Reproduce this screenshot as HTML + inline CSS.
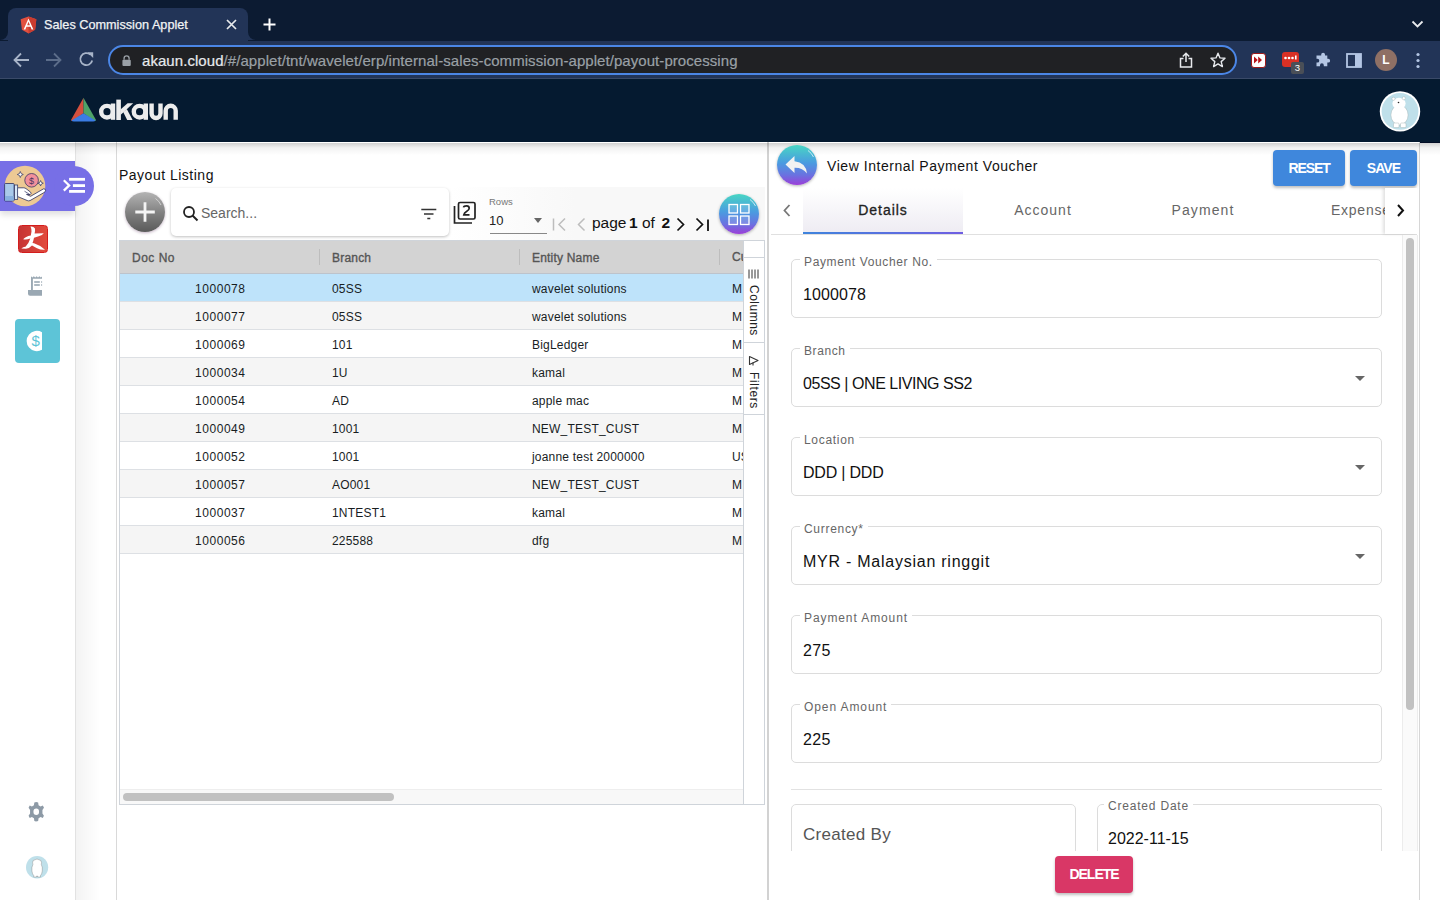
<!DOCTYPE html>
<html><head><meta charset="utf-8">
<style>
*{box-sizing:border-box;margin:0;padding:0}
html,body{width:1440px;height:900px;overflow:hidden;background:#fff;font-family:"Liberation Sans",sans-serif;position:relative}
.a{position:absolute}
/* chrome */
#topbar{left:0;top:0;width:1440px;height:41px;background:#0c1b32}
#tab{left:8px;top:8px;width:240px;height:33px;background:#223457;border-radius:8px 8px 0 0}
#toolbar{left:0;top:41px;width:1440px;height:38px;background:#223457;border-bottom:1px solid #3a4a68}
#omni{left:108px;top:45px;width:1129px;height:30px;background:#202124;border:2px solid #4b86e6;border-radius:15px}
.ctext{color:#e8eaed;font-size:14px}
/* app header */
#apphdr{left:0;top:79px;width:1440px;height:64px;background:#051a30;border-bottom:1px solid #020d25}
/* content */
#sidebar{left:0;top:142px;width:76px;height:758px;background:#fff;border-right:1px solid #e2e2e2}
#strip{left:76px;top:142px;width:41px;height:758px;background:linear-gradient(90deg,#f3f3f3,#fff 60%);border-right:1px solid #d9d9d9}
#hdrshadow{left:0;top:143px;width:1440px;height:12px;background:linear-gradient(180deg,rgba(0,0,0,.18),rgba(0,0,0,.05) 40%,rgba(0,0,0,0))}
#lpanel{left:117px;top:142px;width:652px;height:758px;background:#fff;border-right:2px solid #d2d2d2}
#rpanel{left:769px;top:142px;width:651px;height:758px;background:#fff;border-right:1px solid #d6d6d6}
.poppins{font-family:"Liberation Sans",sans-serif}
/* grid */
.row{position:absolute;left:120px;width:623px;height:28px;border-bottom:1px solid #dde0e4;font-size:12px;color:#181d1f}
.row span{position:absolute;top:8px;white-space:nowrap}
.fld{position:absolute;left:791px;width:591px;height:59px;border:1px solid #dcdcdc;border-radius:5px}
.flbl{position:absolute;background:#fff;padding:0 4px;font-size:12px;color:#666;top:-5px;left:8px;white-space:nowrap;letter-spacing:.3px}
.fval{position:absolute;left:11px;top:26px;font-size:16px;color:#111;white-space:nowrap;letter-spacing:.4px}
.arrow{position:absolute;right:16px;top:27px;width:0;height:0;border-left:5px solid transparent;border-right:5px solid transparent;border-top:5px solid #666}
</style></head><body>

<!-- Browser chrome -->
<div class="a" id="topbar"></div>
<div class="a" id="tab"></div>
<div class="a" id="toolbar"></div>
<div class="a" id="omni"></div>

<!-- tab contents -->
<div class="a" style="left:0;top:32px;width:8px;height:8px;background:#223457"></div>
<div class="a" style="left:0;top:24px;width:8px;height:16px;background:#0c1b32;border-bottom-right-radius:8px"></div>
<div class="a" style="left:248px;top:32px;width:8px;height:8px;background:#223457"></div>
<div class="a" style="left:248px;top:24px;width:8px;height:16px;background:#0c1b32;border-bottom-left-radius:8px"></div>
<svg class="a" style="left:19.5px;top:16px" width="17" height="18" viewBox="0 0 18 19" preserveAspectRatio="none">
  <path d="M9 0.5 L17.3 3.5 L16 14.5 L9 18.5 L2 14.5 L0.7 3.5 Z" fill="#e2503f"/>
  <path d="M9 0.5 L17.3 3.5 L16 14.5 L9 18.5 Z" fill="#c93c30"/>
  <path d="M9 2.6 L3.8 14.2 H5.7 L6.8 11.4 H11.2 L12.3 14.2 H14.2 Z M7.5 9.8 L9 6.2 L10.5 9.8 Z" fill="#fff"/>
</svg>
<div class="a ctext" style="left:44px;top:18px;font-size:12.7px;color:#f1f3f4;white-space:nowrap;-webkit-text-stroke:0.25px #f1f3f4">Sales Commission Applet</div>
<svg class="a" style="left:226px;top:19px" width="11" height="11" viewBox="0 0 11 11"><path d="M1 1L10 10M10 1L1 10" stroke="#e8eaed" stroke-width="1.7"/></svg>
<svg class="a" style="left:263px;top:18px" width="13" height="13" viewBox="0 0 13 13"><path d="M6.5 0.5V12.5M0.5 6.5H12.5" stroke="#fff" stroke-width="2"/></svg>
<svg class="a" style="left:1411px;top:20px" width="13" height="9" viewBox="0 0 13 9"><path d="M1.5 1.5L6.5 6.5L11.5 1.5" stroke="#e8eaed" stroke-width="1.8" fill="none"/></svg>
<!-- nav -->
<svg class="a" style="left:13px;top:52px" width="17" height="16" viewBox="0 0 17 16"><path d="M16 8H2M8 1.5L1.5 8L8 14.5" stroke="#a8b4c8" stroke-width="1.8" fill="none"/></svg>
<svg class="a" style="left:45px;top:52px" width="17" height="16" viewBox="0 0 17 16"><path d="M1 8H15M9 1.5L15.5 8L9 14.5" stroke="#5c6d8a" stroke-width="1.8" fill="none"/></svg>
<svg class="a" style="left:78px;top:51px" width="17" height="17" viewBox="0 0 17 17"><path d="M14.2 9.5A6 6 0 1 1 12.3 3.6" stroke="#a8b4c8" stroke-width="1.8" fill="none"/><path d="M9.3 1.2H15.2V7.1Z" fill="#a8b4c8"/></svg>
<!-- omnibox contents -->
<svg class="a" style="left:121.5px;top:55px" width="9.2" height="11" viewBox="0 0 11 14" preserveAspectRatio="none"><path d="M2.5 6V4.2A3 3 0 0 1 8.5 4.2V6" stroke="#9aa0a6" stroke-width="1.6" fill="none"/><rect x="0.5" y="6" width="10" height="8" rx="1.2" fill="#9aa0a6"/></svg>
<div class="a" style="left:142px;top:52px;font-size:15px;color:#e8eaed;white-space:nowrap;letter-spacing:0.06px;-webkit-text-stroke:0.2px">akaun.cloud<span style="color:#9aa0a6">/#/applet/tnt/wavelet/erp/internal-sales-commission-applet/payout-processing</span></div>
<svg class="a" style="left:1179px;top:52px" width="14" height="16" viewBox="0 0 14 16"><path d="M4.5 6.5H1.5V15H12.5V6.5H9.5" stroke="#e8eaed" stroke-width="1.5" fill="none"/><path d="M7 10V1.5M3.8 4.5L7 1.3L10.2 4.5" stroke="#e8eaed" stroke-width="1.5" fill="none"/></svg>
<svg class="a" style="left:1210px;top:52px" width="16" height="16" viewBox="0 0 16 16"><path d="M8 1.2L10 5.9L15 6.3L11.2 9.6L12.4 14.6L8 11.9L3.6 14.6L4.8 9.6L1 6.3L6 5.9Z" stroke="#e8eaed" stroke-width="1.4" fill="none" stroke-linejoin="round"/></svg>
<!-- extensions -->
<div class="a" style="left:1251px;top:52.5px;width:15px;height:15px;background:#fff;border-radius:3px;border:1.6px solid #9e1a1a"></div>
<svg class="a" style="left:1252px;top:55px" width="12" height="10" viewBox="0 0 12 10"><path d="M2 1.5L5.8 5L2 8.5ZM6.2 1.5L10 5L6.2 8.5Z" fill="#b8141a"/></svg>
<div class="a" style="left:1282px;top:52px;width:17px;height:15px;background:#d93025;border-radius:3px"></div>
<svg class="a" style="left:1283px;top:55px" width="15" height="6" viewBox="0 0 15 6"><circle cx="2.5" cy="3" r="1.3" fill="#fff"/><circle cx="6" cy="3" r="1.3" fill="#fff"/><circle cx="9.5" cy="3" r="1.3" fill="#fff"/><rect x="12" y="0.5" width="1.6" height="4" fill="#fff"/></svg>
<div class="a" style="left:1291px;top:62px;width:13px;height:12px;background:#4a4f57;border-radius:2px;color:#fff;font-size:9.5px;line-height:12px;text-align:center">3</div>
<svg class="a" style="left:1314px;top:52px" width="17" height="17" viewBox="0 0 17 17"><path d="M5 3.5H7.2V2.6A1.9 1.9 0 0 1 11 2.6V3.5H13.3V6.8H14.2A1.9 1.9 0 0 1 14.2 10.6H13.3V14.2H9.8V13.2A1.9 1.9 0 0 0 6 13.2V14.2H2.5V10.6H3.4A1.9 1.9 0 0 0 3.4 6.8H2.5V3.5Z" fill="#b4c6e4"/></svg>
<svg class="a" style="left:1346px;top:53px" width="16" height="15" viewBox="0 0 16 15"><rect x="1" y="1" width="14" height="13" stroke="#b4c6e4" stroke-width="1.8" fill="none"/><rect x="9" y="1" width="6" height="13" fill="#b4c6e4"/></svg>
<div class="a" style="left:1375px;top:49px;width:22px;height:22px;border-radius:50%;background:#8f7065;color:#fff;font-weight:bold;font-size:12px;line-height:22px;text-align:center">L</div>
<svg class="a" style="left:1415px;top:52px" width="6" height="17" viewBox="0 0 6 17"><circle cx="3" cy="2.5" r="1.6" fill="#b4c6e4"/><circle cx="3" cy="8.5" r="1.6" fill="#b4c6e4"/><circle cx="3" cy="14.5" r="1.6" fill="#b4c6e4"/></svg>


<!-- App header -->
<div class="a" id="apphdr"></div>

<!-- logo -->
<svg class="a" style="left:60px;top:90px" width="130" height="40" viewBox="60 90 130 40">
  <path d="M83.5 97.8 L71 120 Q71 121 72.5 121 L83.5 113.3 Z" fill="#d4503e"/>
  <path d="M83.5 97.8 L96 120 Q96 121 94.5 121 L83.5 113.3 Z" fill="#4ea468"/>
  <path d="M83.5 113.3 L71.5 120.5 Q72 121.5 74 121.5 L93 121.5 Q95 121.5 95.5 120.5 Z" fill="#3b7ce3"/>
  <g fill="none" stroke="#ececec" stroke-width="4.4" transform="translate(0,0.3)">
    <circle cx="107" cy="111.4" r="5.8"/>
    <path d="M113 103.2V119.5"/>
    
    <circle cx="139.6" cy="111.4" r="5.8"/>
    <path d="M145.8 103.2V119.5"/>
    <path d="M151.6 103.2V113.2A4.45 4.45 0 0 0 160.5 113.2V103.2"/>
    <path d="M165.7 119.5V110.5A5 5 0 0 1 175.7 110.5V119.5"/>
  </g>
  <g fill="#ececec" transform="translate(0,0.3)"><rect x="116.3" y="99.3" width="4.6" height="20.4"/><path d="M120.5 109.2 L127.6 103 H133.2 L120.5 114.6 Z"/><path d="M123.2 111.8 L126.8 108.6 L132.6 119.7 H127.2 Z"/></g>
</svg>
<!-- header avatar -->
<svg class="a" style="left:1378px;top:89px" width="45" height="45" viewBox="1378 89 45 45">
  <circle cx="1400" cy="111.4" r="20.2" fill="#fff"/>
  <circle cx="1400" cy="111.4" r="18.4" fill="#bfe0ea"/>
  <ellipse cx="1399.5" cy="115" rx="8.6" ry="10" fill="#fff" stroke="#9aa" stroke-width="0.4"/>
  <ellipse cx="1399" cy="103.5" rx="6.6" ry="5.8" fill="#fff"/>
  <circle cx="1393.5" cy="98.8" r="1.6" fill="#fff" stroke="#9aa" stroke-width="0.4"/>
  <circle cx="1403.8" cy="98.2" r="1.6" fill="#fff" stroke="#9aa" stroke-width="0.4"/>
  <circle cx="1398.5" cy="102.5" r="0.8" fill="#222"/>
  <rect x="1393.5" y="123" width="5.5" height="4.6" rx="1" fill="#fff" stroke="#9aa" stroke-width="0.4"/>
  <rect x="1400.5" y="123" width="5.5" height="4.6" rx="1" fill="#fff" stroke="#9aa" stroke-width="0.4"/>
</svg>


<!-- Content -->
<div class="a" id="sidebar"></div>
<div class="a" id="strip"></div>
<div class="a" id="lpanel"></div>
<div class="a" id="rpanel"></div>
<div class="a" id="hdrshadow"></div>


<!-- LEFT PANEL -->
<div class="a" style="left:119px;top:167px;font-size:14px;color:#111;letter-spacing:0.5px;white-space:nowrap">Payout Listing</div>
<div class="a" style="left:449px;top:187px;width:316px;height:54px;background:linear-gradient(90deg,rgba(249,249,249,0),#f8f8f8 40%)"></div>
<!-- add btn -->
<div class="a" style="left:125px;top:192px;width:40px;height:40px;border-radius:50%;background:linear-gradient(180deg,#b4b4b4 0%,#7e7e7e 55%,#5a5a5a 100%);box-shadow:0 1px 3px rgba(60,0,60,.3)"></div>
<svg class="a" style="left:125px;top:192px" width="40" height="40" viewBox="0 0 40 40"><path d="M20 10.3V29.8M10.3 20H29.8" stroke="#f4f4f4" stroke-width="2.8"/><path d="M30.5 6.5A16 16 0 0 1 36 13" stroke="#ddd" stroke-width="0.8" fill="none"/></svg>
<!-- search -->
<div class="a" style="left:171px;top:188px;width:278px;height:48px;background:#fff;border-radius:5px;box-shadow:0 1px 3px rgba(0,0,0,.25)"></div>
<svg class="a" style="left:182px;top:205px" width="17" height="17" viewBox="0 0 17 17"><circle cx="7" cy="7" r="5" stroke="#222" stroke-width="1.8" fill="none"/><path d="M10.5 10.5L15.5 15.5" stroke="#222" stroke-width="2"/></svg>
<div class="a" style="left:201px;top:205px;font-size:14px;color:#666;white-space:nowrap">Search...</div>
<svg class="a" style="left:420px;top:207px" width="18" height="14" viewBox="0 0 18 14"><path d="M1.3 2.5H16.3M4 7H13.5M7.3 11.5H10.3" stroke="#333" stroke-width="1.6"/></svg>
<!-- library icon -->
<svg class="a" style="left:453px;top:201px" width="24" height="24" viewBox="0 0 24 24">
  <path d="M1.5 5V22H19" stroke="#222" stroke-width="1.7" fill="none"/>
  <rect x="5.5" y="1.5" width="16.5" height="16.5" rx="1.5" stroke="#222" stroke-width="1.7" fill="none"/>
  <path d="M10.5 6.3Q10.8 4.8 13.6 4.8Q16.2 4.8 16.2 7.2Q16.2 9 13.5 10.5Q11.2 11.8 10.8 13.8H16.5" stroke="#222" stroke-width="1.7" fill="none"/>
</svg>
<!-- rows select -->
<div class="a" style="left:489px;top:196px;font-size:9.5px;color:#777;white-space:nowrap">Rows</div>
<div class="a" style="left:489px;top:213px;font-size:13px;color:#222;white-space:nowrap">10</div>
<div class="a" style="left:534px;top:218px;width:0;height:0;border-left:4.5px solid transparent;border-right:4.5px solid transparent;border-top:5px solid #666"></div>
<div class="a" style="left:490px;top:233px;width:57px;height:1px;background:#888"></div>
<!-- pager -->
<svg class="a" style="left:552px;top:217px" width="16" height="15" viewBox="0 0 16 15"><path d="M1.5 1.5V13.5" stroke="#bdbdbd" stroke-width="1.5"/><path d="M13 1.5L7 7.5L13 13.5" stroke="#bdbdbd" stroke-width="1.5" fill="none"/></svg>
<svg class="a" style="left:576px;top:217px" width="10" height="15" viewBox="0 0 10 15"><path d="M8.5 1.5L2.5 7.5L8.5 13.5" stroke="#bdbdbd" stroke-width="1.5" fill="none"/></svg>
<div class="a" style="left:592px;top:214px;font-size:15.5px;color:#111;white-space:nowrap">page</div>
<div class="a" style="left:629px;top:214px;font-size:15.5px;color:#111;font-weight:bold;white-space:nowrap">1</div>
<div class="a" style="left:642px;top:214px;font-size:15.5px;color:#111;white-space:nowrap">of</div>
<div class="a" style="left:661.5px;top:214px;font-size:15.5px;color:#111;font-weight:bold;white-space:nowrap">2</div>
<svg class="a" style="left:676px;top:217px" width="10" height="15" viewBox="0 0 10 15"><path d="M1.5 1.5L7.5 7.5L1.5 13.5" stroke="#111" stroke-width="1.7" fill="none"/></svg>
<svg class="a" style="left:695px;top:217px" width="16" height="15" viewBox="0 0 16 15"><path d="M1.5 1.5L7.5 7.5L1.5 13.5" stroke="#111" stroke-width="1.7" fill="none"/><path d="M13 2.5V14" stroke="#111" stroke-width="1.8"/></svg>
<!-- grid view button -->
<div class="a" style="left:719px;top:194px;width:40px;height:40px;border-radius:50%;background:linear-gradient(180deg,#48d6c4 0%,#4a9be0 45%,#6a72e0 75%,#9b3fd8 100%);box-shadow:0 1px 3px rgba(0,0,0,.3)"></div>
<svg class="a" style="left:719px;top:194px" width="40" height="40" viewBox="0 0 40 40">
  <rect x="10" y="10.5" width="8.5" height="8.5" stroke="#fff" stroke-width="1.3" fill="rgba(255,255,255,.15)"/>
  <rect x="21.5" y="10.5" width="8.5" height="8.5" stroke="#fff" stroke-width="1.3" fill="rgba(255,255,255,.15)"/>
  <rect x="10" y="22" width="8.5" height="8.5" stroke="#fff" stroke-width="1.3" fill="rgba(255,255,255,.15)"/>
  <rect x="21.5" y="22" width="8.5" height="8.5" stroke="#fff" stroke-width="1.3" fill="rgba(255,255,255,.15)"/>
  <path d="M31 5.5A17 17 0 0 1 36.5 12" stroke="#e8f4ff" stroke-width="0.8" fill="none"/>
</svg>

<!-- GRID -->
<div class="a" style="left:119px;top:240px;width:646px;height:565px;border:1px solid #cfd4da;background:#fff"></div>
<div class="a" style="left:120px;top:241px;width:623px;height:33px;background:#d3d3d3;border-bottom:1px solid #bdc3cb"></div>
<div class="a" style="left:319px;top:249px;width:1px;height:16px;background:#bdbdbd"></div>
<div class="a" style="left:519px;top:249px;width:1px;height:16px;background:#bdbdbd"></div>
<div class="a" style="left:719px;top:249px;width:1px;height:16px;background:#bdbdbd"></div>
<div class="a" style="left:132px;top:251px;font-size:12px;color:#555;-webkit-text-stroke:0.35px #555;white-space:nowrap;letter-spacing:.5px">Doc No</div>
<div class="a" style="left:332px;top:251px;font-size:12px;color:#555;-webkit-text-stroke:0.35px #555;white-space:nowrap;letter-spacing:.2px">Branch</div>
<div class="a" style="left:532px;top:251px;font-size:12px;color:#555;-webkit-text-stroke:0.35px #555;white-space:nowrap;letter-spacing:.2px">Entity Name</div>
<div class="a" style="left:732px;top:250px;width:11px;overflow:hidden;font-size:12px;color:#555;-webkit-text-stroke:0.35px #555;white-space:nowrap">Cu</div>
<div class="row" style="top:274px;background:#bee3fa"><span style="left:75px;letter-spacing:.55px">1000078</span><span style="left:212px;letter-spacing:.2px">05SS</span><span style="left:412px;letter-spacing:.2px">wavelet solutions</span><span style="left:612px;width:11px;overflow:hidden">M</span></div>
<div class="row" style="top:302px;background:#f5f5f5"><span style="left:75px;letter-spacing:.55px">1000077</span><span style="left:212px;letter-spacing:.2px">05SS</span><span style="left:412px;letter-spacing:.2px">wavelet solutions</span><span style="left:612px;width:11px;overflow:hidden">M</span></div>
<div class="row" style="top:330px;background:#fff"><span style="left:75px;letter-spacing:.55px">1000069</span><span style="left:212px;letter-spacing:.2px">101</span><span style="left:412px;letter-spacing:.2px">BigLedger</span><span style="left:612px;width:11px;overflow:hidden">M</span></div>
<div class="row" style="top:358px;background:#f5f5f5"><span style="left:75px;letter-spacing:.55px">1000034</span><span style="left:212px;letter-spacing:.2px">1U</span><span style="left:412px;letter-spacing:.2px">kamal</span><span style="left:612px;width:11px;overflow:hidden">M</span></div>
<div class="row" style="top:386px;background:#fff"><span style="left:75px;letter-spacing:.55px">1000054</span><span style="left:212px;letter-spacing:.2px">AD</span><span style="left:412px;letter-spacing:.2px">apple mac</span><span style="left:612px;width:11px;overflow:hidden">M</span></div>
<div class="row" style="top:414px;background:#f5f5f5"><span style="left:75px;letter-spacing:.55px">1000049</span><span style="left:212px;letter-spacing:.2px">1001</span><span style="left:412px;letter-spacing:.2px">NEW_TEST_CUST</span><span style="left:612px;width:11px;overflow:hidden">M</span></div>
<div class="row" style="top:442px;background:#fff"><span style="left:75px;letter-spacing:.55px">1000052</span><span style="left:212px;letter-spacing:.2px">1001</span><span style="left:412px;letter-spacing:.2px">joanne test 2000000</span><span style="left:612px;width:11px;overflow:hidden">US</span></div>
<div class="row" style="top:470px;background:#f5f5f5"><span style="left:75px;letter-spacing:.55px">1000057</span><span style="left:212px;letter-spacing:.2px">AO001</span><span style="left:412px;letter-spacing:.2px">NEW_TEST_CUST</span><span style="left:612px;width:11px;overflow:hidden">M</span></div>
<div class="row" style="top:498px;background:#fff"><span style="left:75px;letter-spacing:.55px">1000037</span><span style="left:212px;letter-spacing:.2px">1NTEST1</span><span style="left:412px;letter-spacing:.2px">kamal</span><span style="left:612px;width:11px;overflow:hidden">M</span></div>
<div class="row" style="top:526px;background:#f5f5f5"><span style="left:75px;letter-spacing:.55px">1000056</span><span style="left:212px;letter-spacing:.2px">225588</span><span style="left:412px;letter-spacing:.2px">dfg</span><span style="left:612px;width:11px;overflow:hidden">M</span></div>

<!-- side bar columns/filters -->
<div class="a" style="left:743px;top:241px;width:1px;height:563px;background:#cfd4da"></div>
<div class="a" style="left:744px;top:257px;width:20px;height:1px;background:#cfd4da"></div>
<div class="a" style="left:744px;top:342px;width:20px;height:1px;background:#cfd4da"></div>
<div class="a" style="left:744px;top:414px;width:20px;height:1px;background:#cfd4da"></div>
<svg class="a" style="left:748px;top:268px" width="12" height="12" viewBox="0 0 12 12"><path d="M1 1.5V10.5M4 1.5V10.5M7 1.5V10.5M10 1.5V10.5" stroke="#333" stroke-width="1"/></svg>
<div class="a" style="left:747px;top:285px;width:14px;height:56px"><div style="position:absolute;left:0;top:0;transform-origin:0 0;transform:translate(14px,0) rotate(90deg);font-size:12px;color:#222;white-space:nowrap;letter-spacing:0.5px">Columns</div></div>
<svg class="a" style="left:748px;top:355px" width="12" height="12" viewBox="0 0 12 12"><path d="M1.5 1.5L10 5.5L1.5 9.5Z" stroke="#333" stroke-width="1.1" fill="none" stroke-linejoin="round"/><path d="M5 7.5L5 10.5" stroke="#333" stroke-width="1.1"/></svg>
<div class="a" style="left:747px;top:372px;width:14px;height:40px"><div style="position:absolute;left:0;top:0;transform-origin:0 0;transform:translate(14px,0) rotate(90deg);font-size:12px;color:#222;white-space:nowrap;letter-spacing:0.6px">Filters</div></div>
<!-- horizontal scrollbar -->
<div class="a" style="left:120px;top:789px;width:623px;height:15px;background:#f8f8f8;border-top:1px solid #eee"></div>
<div class="a" style="left:123px;top:793px;width:271px;height:8px;border-radius:4px;background:#c1c1c1"></div>


<!-- RIGHT PANEL -->
<div class="a" style="left:777px;top:145px;width:40px;height:40px;border-radius:50%;background:linear-gradient(180deg,#48d6c4 0%,#4a9be0 45%,#6a72e0 75%,#9b3fd8 100%);box-shadow:0 1px 3px rgba(0,0,0,.3)"></div>
<svg class="a" style="left:777px;top:145px" width="40" height="40" viewBox="0 0 40 40">
  <path d="M17.5 11 L8.5 19.5 L17.5 28 V22.8 Q25.5 22.5 30 28.5 Q29 17.5 17.5 16.2 Z" fill="#f2f2f2"/>
  <path d="M31 5.5A17 17 0 0 1 36.5 12" stroke="#e8f4ff" stroke-width="0.8" fill="none"/>
</svg>
<div class="a" style="left:827px;top:157.5px;font-size:14px;color:#111;letter-spacing:0.55px;white-space:nowrap">View Internal Payment Voucher</div>
<div class="a" style="left:1273px;top:150px;width:72px;height:36px;border-radius:4px;background:#3f87dc;box-shadow:0 2px 3px rgba(0,0,0,.25)"></div>
<div class="a" style="left:1350px;top:150px;width:67px;height:36px;border-radius:4px;background:#3f87dc;box-shadow:0 2px 3px rgba(0,0,0,.25)"></div>
<div class="a" style="left:1273px;top:160px;width:72px;text-align:center;font-size:14px;font-weight:bold;color:#fff;letter-spacing:-1.1px">RESET</div>
<div class="a" style="left:1350px;top:160px;width:67px;text-align:center;font-size:14px;font-weight:bold;color:#fff;letter-spacing:-0.9px">SAVE</div>
<!-- tabs -->
<div class="a" style="left:771px;top:234px;width:646px;height:1px;background:#e0e0e0"></div>
<svg class="a" style="left:781px;top:203px" width="12" height="15" viewBox="0 0 12 15"><path d="M8.5 2L3.5 7.5L8.5 13" stroke="#777" stroke-width="1.8" fill="none"/></svg>
<div class="a" style="left:803px;top:188px;width:160px;height:44px;background:linear-gradient(180deg,#fff,#eeecf3)"></div>
<div class="a" style="left:803px;top:232px;width:160px;height:2px;background:linear-gradient(90deg,#3e84dc,#6f5ee2)"></div>
<div class="a" style="left:803px;top:202px;width:160px;text-align:center;font-size:14px;color:#222;letter-spacing:0.95px;-webkit-text-stroke:0.3px #222">Details</div>
<div class="a" style="left:963px;top:202px;width:160px;text-align:center;font-size:14px;color:#666;letter-spacing:1px">Account</div>
<div class="a" style="left:1123px;top:202px;width:160px;text-align:center;font-size:14px;color:#666;letter-spacing:1.1px">Payment</div>
<div class="a" style="left:1283px;top:188px;width:102px;height:46px;overflow:hidden"><div style="position:absolute;left:48px;top:14px;font-size:14px;color:#666;letter-spacing:0.75px;white-space:nowrap">Expense</div></div>
<div class="a" style="left:1385px;top:188px;width:32px;height:46px;background:#fff;box-shadow:-2px 0 3px rgba(0,0,0,.12)"></div>
<svg class="a" style="left:1395px;top:203px" width="12" height="15" viewBox="0 0 12 15"><path d="M3 2L8 7.5L3 13" stroke="#111" stroke-width="2" fill="none"/></svg>
<!-- form scroll -->
<div class="a" style="left:1402px;top:235px;width:16px;height:616px;background:#fafafa;border-left:1px solid #ececec;border-right:1px solid #ececec"></div>
<div class="a" style="left:1406px;top:238px;width:8px;height:472px;border-radius:4px;background:#c1c1c1"></div>
<div class="fld" style="top:259px"><div class="flbl" style="letter-spacing:0.63px">Payment Voucher No.</div><div class="fval" style="letter-spacing:0.1px">1000078</div></div>
<div class="fld" style="top:348px"><div class="flbl" style="letter-spacing:0.6px">Branch</div><div class="fval" style="letter-spacing:-0.45px">05SS | ONE LIVING SS2</div><div class="arrow"></div></div>
<div class="fld" style="top:437px"><div class="flbl" style="letter-spacing:0.7px">Location</div><div class="fval" style="letter-spacing:-0.2px">DDD | DDD</div><div class="arrow"></div></div>
<div class="fld" style="top:526px"><div class="flbl" style="letter-spacing:0.7px">Currency*</div><div class="fval" style="letter-spacing:0.75px">MYR - Malaysian ringgit</div><div class="arrow"></div></div>
<div class="fld" style="top:615px"><div class="flbl" style="letter-spacing:0.9px">Payment Amount</div><div class="fval" style="letter-spacing:0.3px">275</div></div>
<div class="fld" style="top:704px"><div class="flbl" style="letter-spacing:0.9px">Open Amount</div><div class="fval" style="letter-spacing:0.3px">225</div></div>

<div class="a" style="left:791px;top:789px;width:591px;height:1px;background:#e2e2e2"></div>
<div class="a" style="left:770px;top:804px;width:631px;height:47px;overflow:hidden">
  <div style="position:absolute;left:21px;top:0;width:285px;height:60px;border:1px solid #dcdcdc;border-radius:5px"></div>
  <div style="position:absolute;left:33px;top:21px;font-size:17px;color:#555;letter-spacing:0.3px;white-space:nowrap">Created By</div>
  <div style="position:absolute;left:327px;top:0;width:285px;height:60px;border:1px solid #dcdcdc;border-radius:5px"></div>
  
  <div style="position:absolute;left:338px;top:26px;font-size:16px;color:#111;white-space:nowrap">2022-11-15</div>
</div>
<div class="a" style="left:1104px;top:799px;background:#fff;padding:0 4px;font-size:12px;color:#666;letter-spacing:0.8px;white-space:nowrap">Created Date</div>
<!-- footer -->
<div class="a" style="left:769px;top:851px;width:650px;height:49px;background:#fff"></div>
<div class="a" style="left:1055px;top:856px;width:78px;height:37px;border-radius:4px;background:#d93766;box-shadow:0 2px 3px rgba(0,0,0,.25)"></div>
<div class="a" style="left:1055px;top:866px;width:78px;text-align:center;font-size:14px;font-weight:bold;color:#fff;letter-spacing:-1.0px">DELETE</div>

<!-- sidebar items -->
<div class="a" style="left:0;top:161px;width:75px;height:50px;background:#776fe6;box-shadow:0 4px 6px rgba(0,0,0,.12)"></div>
<div class="a" style="left:54px;top:166px;width:40px;height:40px;border-radius:20px;background:#776fe6"></div>
<svg class="a" style="left:0;top:160px" width="50" height="52" viewBox="0 160 50 52">
  <circle cx="25" cy="186" r="20.3" fill="#edc994"/>
  <path d="M20.3 171.5l0.9 2.1 2.1 0.9-2.1 0.9-0.9 2.1-0.9-2.1-2.1-0.9 2.1-0.9z" fill="#fff" stroke="#2b2f5e" stroke-width="0.7"/>
  <path d="M40.6 180.5l0.8 1.9 1.9 0.8-1.9 0.8-0.8 1.9-0.8-1.9-1.9-0.8 1.9-0.8z" fill="#fff" stroke="#2b2f5e" stroke-width="0.7"/>
  <circle cx="31.6" cy="180.3" r="6.8" fill="#f2909b" stroke="#3b3563" stroke-width="0.8"/>
  <text x="31.6" y="183.6" font-size="9" text-anchor="middle" fill="#4a3560" font-family="Liberation Sans">$</text>
  <path d="M17.5 187.8 L23.8 187.8 Q25 187.9 26 188.6 L30.6 192.2 Q31.8 193.6 30.2 194.6 L26.5 194.4 L30.6 196.3 L43.6 188.8 Q45.8 188.6 45.6 190.8 Q45.3 191.8 44 192.6 L30 200.6 Q28.6 201.2 27.2 200.5 L17.5 196.5 Z" fill="#fff" stroke="#2b2f5e" stroke-width="0.8" stroke-linejoin="round"/><path d="M24.5 191.2 L29.8 194.5" stroke="#2b2f5e" stroke-width="0.7"/>
  <rect x="14.5" y="185" width="3.2" height="14.5" fill="#d8e8f8" stroke="#2b2f5e" stroke-width="0.7"/>
  <rect x="4.6" y="183.5" width="9.5" height="17.5" rx="0.8" fill="#a9c9ea" stroke="#2b2f5e" stroke-width="0.8"/>
  <rect x="5" y="196" width="8.7" height="4.6" fill="#88b0e0"/>
</svg>
<svg class="a" style="left:62px;top:177px" width="24" height="17" viewBox="62 177 24 17">
  <path d="M63.8 180.2L69.2 185.4L63.8 190.6" stroke="#fff" stroke-width="2.2" fill="none"/>
  <rect x="69.1" y="177.9" width="15.9" height="2.8" fill="#fff"/>
  <rect x="72.9" y="184.2" width="12.1" height="2.8" fill="#fff"/>
  <rect x="69.1" y="190" width="15.9" height="2.8" fill="#fff"/>
</svg>
<!-- red icon -->
<div class="a" style="left:18px;top:224.5px;width:30px;height:28.5px;border-radius:3.5px;background:linear-gradient(90deg,#c63535,#e24a3c);border:1px solid #d41c1c"></div>
<svg class="a" style="left:14px;top:220px" width="38" height="36" viewBox="14 220 38 36">
  <path d="M30.5 226.5 Q33.5 226.2 35 228.5 Q35.3 231 34.6 233.5 L43.8 233.2 Q42 236 38 236.5 L34 237.8 Q33.4 241 32.5 243 L34 243.2 Q40 245 45 249.8 Q41 250.2 37 248.3 Q34 246.5 32 245.5 Q29.5 248.3 26 248.8 L21.3 248.5 Q23.5 246.5 25.5 246.7 Q29 243 30.3 238.5 Q26.5 239.8 23.2 239.2 Q25.5 236.5 30.8 235.5 L31.5 231.5 Q31.5 228.5 30.5 226.5 Z" fill="#fff"/>
</svg>
<!-- receipt icon -->
<svg class="a" style="left:22px;top:270px" width="26" height="30" viewBox="22 270 26 30">
  <path d="M31 276.3 L32.4 277.6 L33.8 276.3 L35.2 277.6 L36.6 276.3 L38 277.6 L39.4 276.3 L40.8 277.6 L42 276.6 V278.8 H32.9 V290 H31 Z" fill="#9aa8b3"/>
  <rect x="34.2" y="281.2" width="5.6" height="1.6" fill="#9aa8b3"/>
  <rect x="34.2" y="284.2" width="5.6" height="1.6" fill="#9aa8b3"/>
  <rect x="41.2" y="281.2" width="0.9" height="1.6" fill="#9aa8b3"/>
  <rect x="41.2" y="284.2" width="0.9" height="1.6" fill="#9aa8b3"/>
  <path d="M28 290 H42 V295.8 H30 Q28 295.8 28 293.8 Z" fill="#9aa8b3"/>
</svg>
<!-- teal dollar -->
<div class="a" style="left:15px;top:318.5px;width:45px;height:44.5px;border-radius:4px;background:#5dc4d7"></div>
<svg class="a" style="left:15px;top:318px" width="45" height="45" viewBox="15 318 45 45">
  <path d="M42 332.2 A10.2 10.2 0 1 0 42 349.8 Z" fill="#fff"/>
  <text x="35.6" y="346.2" font-size="15" text-anchor="middle" fill="#5dc4d7" font-family="Liberation Sans">$</text>
</svg>
<!-- gear -->
<svg class="a" style="left:28px;top:800.5px" width="16.5" height="21.5" viewBox="0 0 20 22" preserveAspectRatio="none">
  <path d="M10 1 L12.3 1.5 L12.8 4.3 L15.3 5.7 L17.9 4.7 L19.3 6.7 L19.3 7 L17.5 9.2 L17.5 12.8 L19.3 15 L17.9 17.3 L15.3 16.3 L12.8 17.7 L12.3 20.5 L9.7 21 L7.7 20.5 L7.2 17.7 L4.7 16.3 L2.1 17.3 L0.7 15 L2.5 12.8 L2.5 9.2 L0.7 7 L2.1 4.7 L4.7 5.7 L7.2 4.3 L7.7 1.5 Z M10 7.6 A3.4 3.4 0 1 0 10 14.4 A3.4 3.4 0 1 0 10 7.6Z" fill="#8d9aa6" fill-rule="evenodd"/>
</svg>
<!-- small bear -->
<svg class="a" style="left:25px;top:855px" width="25" height="25" viewBox="0 0 25 25">
  <ellipse cx="12.1" cy="12.2" rx="11.1" ry="11.3" fill="#bfe0ea"/>
  <path d="M8.2 5.5 Q12 2.5 15.8 5.5 Q17 7.5 16.3 9.5 Q17.8 12 17.3 16 Q16.8 19.5 15.5 20.5 L15.5 22 H12.6 V21 H11.6 V22 H8.7 V20.5 Q7.3 19.5 6.9 16 Q6.4 12 7.9 9.5 Q7.2 7.5 8.2 5.5 Z" fill="#fff" stroke="#888" stroke-width="0.45"/>
</svg>
</body></html>
